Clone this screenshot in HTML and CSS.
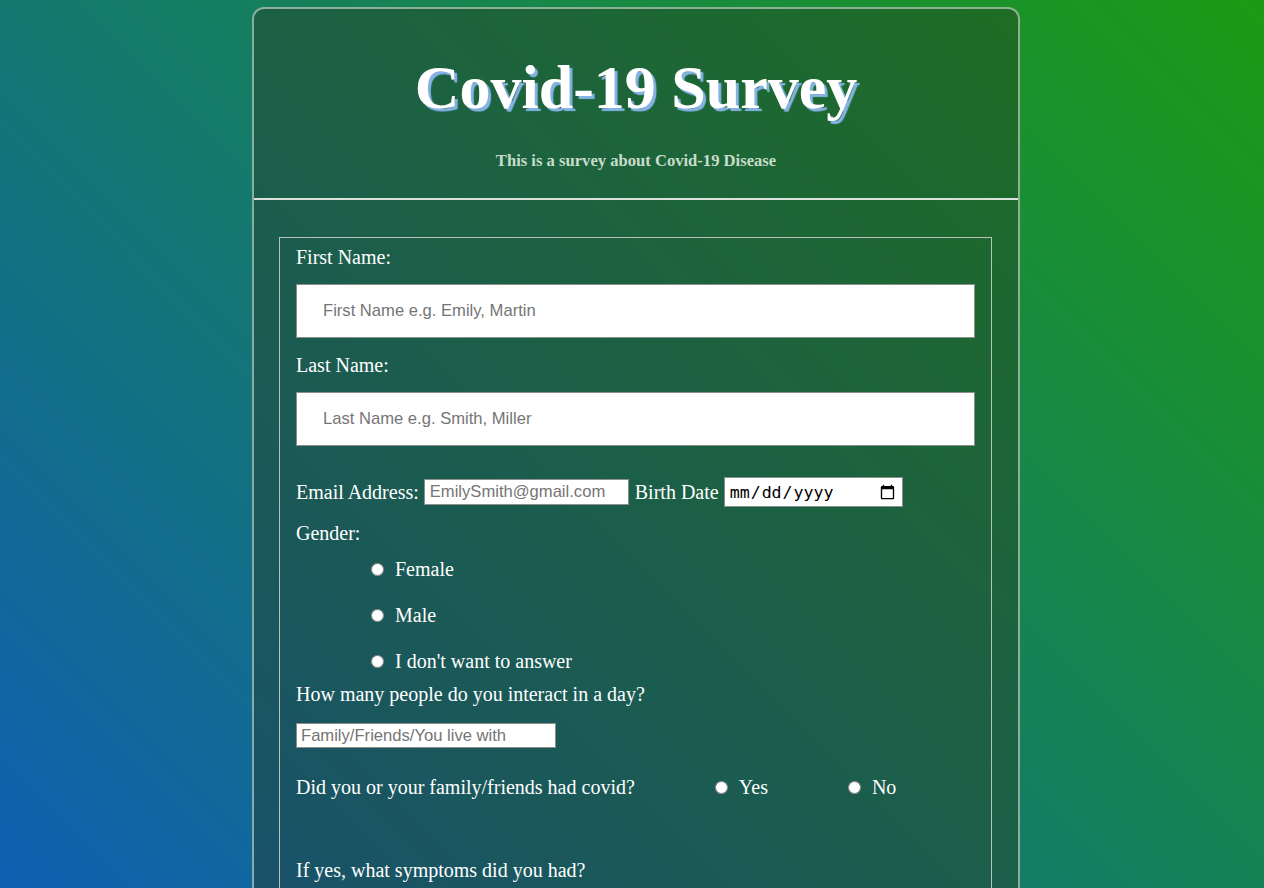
FILE: index.html
```html
<!DOCTYPE html>
<html lang="en">
<head>
<meta charset="utf-8">
<title>Covid-19 Survey</title>
<link rel="stylesheet" href="styles.css">
</head>
<body>
<div class="survey">
  <header class="survey-header">
    <h1 class="title">Covid-19 Survey</h1>
    <p class="subtitle">This is a survey about Covid-19 Disease</p>
  </header>
  <form class="survey-form">
    <div class="panel">
      <label class="field-label label-first" for="fname">First Name:</label>
      <input class="text-input" id="fname" type="text" placeholder="First Name e.g. Emily, Martin">
      <label class="field-label label-next" for="lname">Last Name:</label>
      <input class="text-input" id="lname" type="text" placeholder="Last Name e.g. Smith, Miller">

      <div class="inline-row">
        <label for="email">Email Address:</label>
        <input class="email-input" id="email" type="email" placeholder="EmilySmith@gmail.com">
        <label for="bdate">Birth Date</label>
        <input class="date-input" id="bdate" type="date">
      </div>

      <div class="field-label gender-label">Gender:</div>
      <div class="radio-list">
        <label class="radio-option"><input class="radio" type="radio" name="gender">Female</label>
        <label class="radio-option"><input class="radio" type="radio" name="gender">Male</label>
        <label class="radio-option"><input class="radio" type="radio" name="gender">I don't want to answer</label>
      </div>

      <label class="field-label people-label" for="people">How many people do you interact in a day?</label>
      <input class="small-input" id="people" type="text" placeholder="Family/Friends/You live with">

      <div class="field-label covid-row">Did you or your family/friends had covid? <label class="inline-radio"><input class="radio" type="radio" name="covid">Yes</label> <label class="inline-radio"><input class="radio" type="radio" name="covid">No</label></div>

      <div class="field-label symptoms-label">If yes, what symptoms did you had?</div>
    </div>
  </form>
</div>
</body>
</html>
```

FILE: styles.css
```css
html {
  background: linear-gradient(45deg, #0f5fb2 0%, #1b9b14 100%) fixed;
  min-height: 100%;
}

body {
  margin: 0;
  font-family: "Liberation Serif", "Times New Roman", serif;
  color: #ffffff;
}

.survey {
  box-sizing: border-box;
  width: 768px;
  margin: 7px 0 0 252px;
  border: 2px solid rgba(215, 225, 215, 0.6);
  border-radius: 12px;
  background: rgba(38, 56, 34, 0.42);
  padding-bottom: 40px;
}

.survey-header {
  padding: 43px 0 28px;
  border-bottom: 2px solid #d9e2d9;
  text-align: center;
}

.title {
  margin: 0;
  font-size: 62px;
  line-height: 71px;
  font-weight: bold;
  color: #ffffff;
  text-shadow: 3px 3px 1px #86b3e6;
}

.subtitle {
  margin: 29px 0 0;
  font-size: 16.6px;
  line-height: 18px;
  font-weight: bold;
  color: #c9dccb;
}

.survey-form {
  margin: 37px 26px 0 25px;
}

.panel {
  border: 1px solid #b9bfb9;
  padding: 8px 16px 140px;
  display: flex;
  flex-direction: column;
  align-items: flex-start;
}

.field-label {
  display: block;
  font-size: 20px;
  line-height: 23px;
}

.label-first { margin-bottom: 15px; }
.label-next { margin: 16px 0 15px; }

.text-input {
  box-sizing: border-box;
  width: 100%;
  height: 54px;
  padding: 0 26px;
  border: 1px solid #8a8f8a;
  background: #ffffff;
  font-family: "Liberation Sans", Arial, sans-serif;
  font-size: 16.6px;
  color: #333;
}

.text-input::placeholder,
.email-input::placeholder,
.small-input::placeholder {
  color: #757575;
}

.inline-row {
  display: flex;
  align-items: center;
  height: 30px;
  margin-top: 31px;
  font-size: 20px;
  line-height: 23px;
}

.email-input {
  box-sizing: border-box;
  width: 205px;
  height: 26px;
  margin: 0 6px 0 5px;
  padding: 0 5px;
  border: 1px solid #8a8f8a;
  font-family: "Liberation Sans", Arial, sans-serif;
  font-size: 16.6px;
}

.date-input {
  box-sizing: border-box;
  width: 179px;
  height: 30px;
  margin-left: 5px;
  padding: 0 4px;
  border: 1px solid #8a8f8a;
  background: #ffffff;
  font-family: "DejaVu Sans Mono", monospace;
  font-size: 16.6px;
  color: #000;
}

.gender-label { margin-top: 15px; }

.radio-list {
  display: flex;
  flex-direction: column;
  gap: 23px;
  margin-top: 13px;
}

.radio-option {
  display: block;
  font-size: 20px;
  line-height: 23px;
}

.radio {
  margin: 3px 11px 0 75px;
  width: 13px;
  height: 13px;
}

.people-label { margin-top: 10px; }

.small-input {
  box-sizing: border-box;
  width: 260px;
  height: 25px;
  margin-top: 17px;
  padding: 0 4px;
  border: 1px solid #8a8f8a;
  font-family: "Liberation Sans", Arial, sans-serif;
  font-size: 16.6px;
}

.covid-row { margin-top: 28px; }

.inline-radio { font-size: 20px; }

.symptoms-label { margin-top: 60px; }
```
